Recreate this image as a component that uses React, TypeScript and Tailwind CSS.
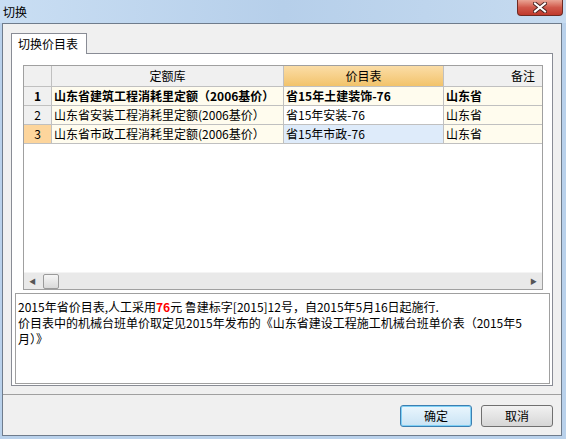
const font = { fontFamily: '"Noto Sans CJK SC", "Liberation Sans", sans-serif' };

type Row = { no: string; lib: string; price: string; note: string; bold?: boolean; current?: boolean };

const rows: Row[] = [
  { no: "1", lib: "山东省建筑工程消耗里定额（2006基价）", price: "省15年土建装饰-76", note: "山东省", bold: true },
  { no: "2", lib: "山东省安装工程消耗里定额(2006基价）", price: "省15年安装-76", note: "山东省" },
  { no: "3", lib: "山东省市政工程消耗里定额(2006基价）", price: "省15年市政-76", note: "山东省", current: true },
];

function CloseButton() {
  return (
    <div className="mr-[3px] w-[46px] h-[16px] rounded-b-[4px] border border-t-0 border-[#6e2a22] bg-gradient-to-b from-[#e9a494] via-[#d0584a] to-[#c0392c] flex items-center justify-center">
      <svg width="14" height="11" viewBox="0 0 14 11">
        <path d="M2 1.5 L12 9.5 M12 1.5 L2 9.5" stroke="#4a2420" strokeWidth="4" strokeLinecap="square" />
        <path d="M2 1.5 L12 9.5 M12 1.5 L2 9.5" stroke="#ffffff" strokeWidth="2" strokeLinecap="square" />
      </svg>
    </div>
  );
}

function Grid() {
  return (
    <div className="w-[520px] h-[225px] border border-[#a0a0a0] bg-white flex flex-col overflow-hidden text-[12px] text-black">
      <div className="flex h-[21px] border-b border-[#c0c0c0] shrink-0">
        <div className="w-[28px] shrink-0 bg-[#f0f0f0] border-r border-[#c0c0c0]" />
        <div className="w-[232px] shrink-0 bg-[#f0f0f0] border-r border-[#c0c0c0] flex items-center justify-center">定额库</div>
        <div className="w-[160px] shrink-0 bg-gradient-to-b from-[#fbdda6] to-[#f2c36a] border-r border-[#c0c0c0] flex items-center justify-center">价目表</div>
        <div className="flex-1 bg-[#f0f0f0] flex items-center justify-end pr-[7px]">备注</div>
      </div>
      {rows.map((r) => (
        <div key={r.no} className={`flex h-[19px] border-b border-[#c0c0c0] shrink-0 ${r.bold ? "font-bold" : ""}`}>
          <div className={`w-[28px] shrink-0 border-r border-[#c0c0c0] flex items-center justify-center ${r.current ? "bg-[#fdd59c]" : "bg-[#f0f0f0]"}`}>{r.no}</div>
          <div className="w-[232px] shrink-0 bg-[#fffcee] border-r border-[#c0c0c0] flex items-center pl-[2px] whitespace-nowrap overflow-hidden">{r.lib}</div>
          <div className={`w-[160px] shrink-0 border-r border-[#c0c0c0] flex items-center pl-[2px] whitespace-nowrap ${r.current ? "bg-[#deebfa]" : r.bold ? "bg-[#fffcee]" : "bg-white"}`}>{r.price}</div>
          <div className="flex-1 bg-[#fffcee] flex items-center pl-[2px]">{r.note}</div>
        </div>
      ))}
      <div className="flex-1" />
      <div className="h-[17px] shrink-0 bg-[#e9e9e9] border-t border-[#f4f4f4] flex items-center">
        <div className="w-[17px] h-full flex items-center justify-center text-[#555] text-[7px]">◀</div>
        <div className="ml-[2px] w-[16px] h-[15px] rounded-[2px] border border-[#9a9a9a] bg-gradient-to-b from-[#f6f6f6] to-[#d9d9d9]" />
        <div className="flex-1" />
        <div className="w-[17px] h-full flex items-center justify-center text-[#555] text-[7px]">▶</div>
      </div>
    </div>
  );
}

export default function App() {
  return (
    <div className="w-[566px] h-[439px] bg-[#b9d1eb] flex flex-col overflow-hidden" style={font}>
      <div className="h-[23px] shrink-0 flex justify-between items-start bg-gradient-to-r from-[#c9def3] via-[#b6cfea] to-[#c6dbf0]">
        <div className="pl-[3px] pt-[4px] text-[12px] text-black leading-[16px]">切换</div>
        <CloseButton />
      </div>

      <div className="ml-[2px] mr-[4px] h-[413px] shrink-0 border border-[#6f7c8c] bg-[#f0f0f0] flex flex-col">
        <div className="pt-[9px] pl-[8px]">
          <div className="relative z-10 w-[76px] h-[21px] -mb-px border border-b-0 border-[#898c95] bg-white text-[12px] pl-[6px] flex items-center">
            切换价目表
          </div>
          <div className="w-[542px] h-[333px] border border-[#898c95] bg-white pt-[11px] pl-[11px] flex flex-col">
            <Grid />
            <div className="mt-[3px] ml-[-8px] w-[535px] h-[91px] border border-[#a0a0a0] bg-white pt-[5px] pl-[2px] text-[12px] leading-[16px] text-black">
              2015年省价目表,人工采用<span className="text-[#ff0000] font-bold">76</span>元 鲁建标字[2015]12号，自2015年5月16日起施行.
              <br />
              价目表中的机械台班单价取定见2015年发布的《山东省建设工程施工机械台班单价表（2015年5
              <br />
              月）》
            </div>
          </div>
        </div>

        <div className="mt-[8px] h-px bg-[#a0a0a0]" />
        <div className="flex-1 flex justify-end items-start gap-[9px] pt-[10px] pr-[8px]">
          <button className="w-[72px] h-[22px] rounded-[3px] border border-[#3c7fb1] shadow-[0_0_0_1px_#7fd0f5_inset] bg-gradient-to-b from-[#eaf6fd] to-[#c9e3f4] text-[12px] text-black">
            确定
          </button>
          <button className="w-[72px] h-[22px] rounded-[3px] border border-[#707070] bg-gradient-to-b from-[#f2f2f2] to-[#d6d6d6] text-[12px] text-black">
            取消
          </button>
        </div>
      </div>
    </div>
  );
}
